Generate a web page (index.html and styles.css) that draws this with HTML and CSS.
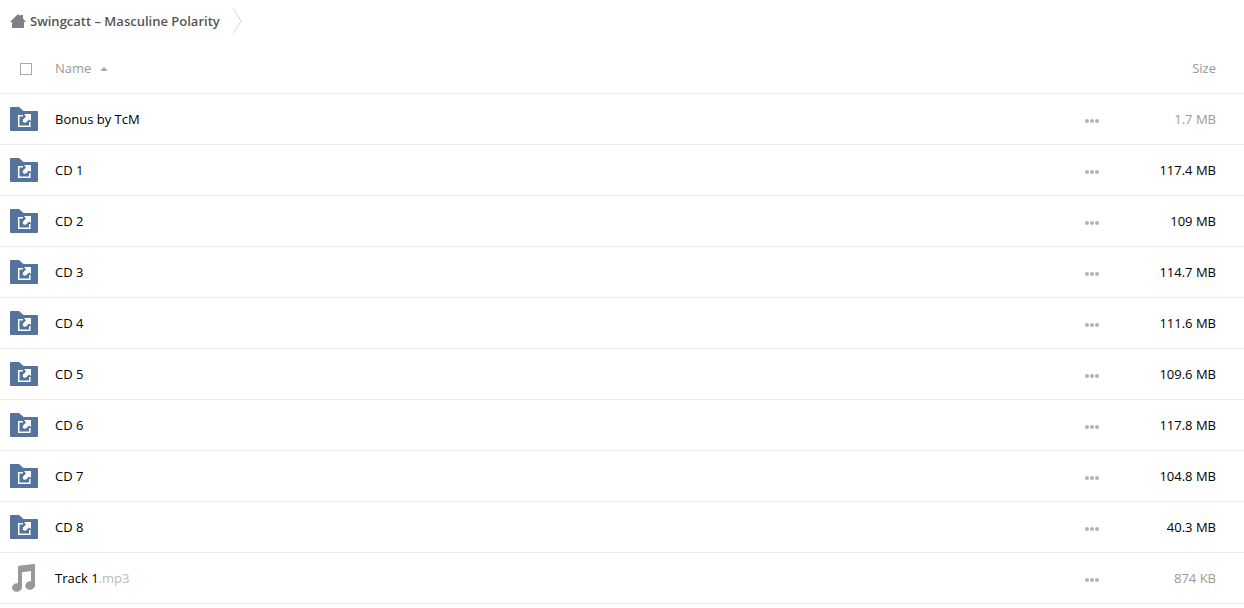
FILE: index.html
```
<!DOCTYPE html>
<html lang="en">
<head>
    <meta charset="UTF-8">
    <title>Swingcatt – Masculine Polarity</title>
    <link rel="stylesheet" href="styles.css">
</head>
<body>

<svg class="sprite" aria-hidden="true">
    <symbol id="folder" viewBox="0 0 28 24">
        <path fill="#54739d" d="M0 1Q0 0 1 0H9L13.500 4H27Q28 4 28 5V23Q28 24 27 24H1Q0 24 0 23Z"/>
        <path fill="none" stroke="#fff" stroke-width="1.500" d="M13 8.700H8.700V19.300H19.800V15"/>
        <path fill="#fff" d="M14 7H21V14L19 12.400L16 15.600L14 15.800L12.700 14.500L13 12.600L16 9.400Z"/>
    </symbol>
    <symbol id="music" viewBox="0 0 24 28">
        <g fill="#999">
            <path d="M6 3Q6 2 7 1.800L22 0Q23 0 23 1V21.500H19V7L10 8.300V23.500H6Z"/>
            <ellipse cx="5" cy="23.500" rx="5" ry="4.300" transform="rotate(-15 5 23.500)"/>
            <ellipse cx="18.200" cy="21.500" rx="4.900" ry="4.300" transform="rotate(-15 18.200 21.500)"/>
        </g>
    </symbol>
    <symbol id="dots" viewBox="0 0 14 4">
        <g fill="#b3b3b3"><circle cx="2" cy="2" r="2"/><circle cx="7" cy="2" r="2"/><circle cx="12" cy="2" r="2"/></g>
    </symbol>
</svg>

<nav class="breadcrumbs">
    <a href="#">
        <svg class="home" viewBox="0 0 16 14"><path fill="#808080" d="M8 0L10 2V1H13V4.500L16 8H14V14H2V8H0Z"/></svg>
        <span>Swingcatt – Masculine Polarity</span>
    </a>
    <svg class="arrow" viewBox="0 0 9 24"><path fill="none" stroke="#d5d5d5" d="M0.500 0L8 12L0.500 24"/></svg>
</nav>

<table class="files">
    <thead>
        <tr>
            <th class="icon"><input type="checkbox" class="check" aria-label="Select all"></th>
            <th class="name"><button type="button" class="sort">Name</button></th>
            <th class="actions"></th>
            <th class="size"><button type="button">Size</button></th>
        </tr>
    </thead>
    <tbody>
        <tr>
            <td class="icon"><svg class="folder"><use href="#folder"/></svg></td>
            <td class="name"><a href="#">Bonus by TcM</a></td>
            <td class="actions"><button type="button" aria-label="More"><svg class="dots"><use href="#dots"/></svg></button></td>
            <td class="size small">1.7 MB</td>
        </tr>
        <tr>
            <td class="icon"><svg class="folder"><use href="#folder"/></svg></td>
            <td class="name"><a href="#">CD 1</a></td>
            <td class="actions"><button type="button" aria-label="More"><svg class="dots"><use href="#dots"/></svg></button></td>
            <td class="size">117.4 MB</td>
        </tr>
        <tr>
            <td class="icon"><svg class="folder"><use href="#folder"/></svg></td>
            <td class="name"><a href="#">CD 2</a></td>
            <td class="actions"><button type="button" aria-label="More"><svg class="dots"><use href="#dots"/></svg></button></td>
            <td class="size">109 MB</td>
        </tr>
        <tr>
            <td class="icon"><svg class="folder"><use href="#folder"/></svg></td>
            <td class="name"><a href="#">CD 3</a></td>
            <td class="actions"><button type="button" aria-label="More"><svg class="dots"><use href="#dots"/></svg></button></td>
            <td class="size">114.7 MB</td>
        </tr>
        <tr>
            <td class="icon"><svg class="folder"><use href="#folder"/></svg></td>
            <td class="name"><a href="#">CD 4</a></td>
            <td class="actions"><button type="button" aria-label="More"><svg class="dots"><use href="#dots"/></svg></button></td>
            <td class="size">111.6 MB</td>
        </tr>
        <tr>
            <td class="icon"><svg class="folder"><use href="#folder"/></svg></td>
            <td class="name"><a href="#">CD 5</a></td>
            <td class="actions"><button type="button" aria-label="More"><svg class="dots"><use href="#dots"/></svg></button></td>
            <td class="size">109.6 MB</td>
        </tr>
        <tr>
            <td class="icon"><svg class="folder"><use href="#folder"/></svg></td>
            <td class="name"><a href="#">CD 6</a></td>
            <td class="actions"><button type="button" aria-label="More"><svg class="dots"><use href="#dots"/></svg></button></td>
            <td class="size">117.8 MB</td>
        </tr>
        <tr>
            <td class="icon"><svg class="folder"><use href="#folder"/></svg></td>
            <td class="name"><a href="#">CD 7</a></td>
            <td class="actions"><button type="button" aria-label="More"><svg class="dots"><use href="#dots"/></svg></button></td>
            <td class="size">104.8 MB</td>
        </tr>
        <tr>
            <td class="icon"><svg class="folder"><use href="#folder"/></svg></td>
            <td class="name"><a href="#">CD 8</a></td>
            <td class="actions"><button type="button" aria-label="More"><svg class="dots"><use href="#dots"/></svg></button></td>
            <td class="size">40.3 MB</td>
        </tr>
        <tr>
            <td class="icon"><svg class="music"><use href="#music"/></svg></td>
            <td class="name"><a href="#">Track 1<span class="ext">.mp3</span></a></td>
            <td class="actions"><button type="button" aria-label="More"><svg class="dots"><use href="#dots"/></svg></button></td>
            <td class="size small">874 KB</td>
        </tr>
    </tbody>
</table>

</body>
</html>
```
FILE: styles.css
```
body {
    margin: 0;
    background: #fff;
    color: #000;
    font: 13px/18px "Open Sans", sans-serif;
}
a {
    color: inherit;
    text-decoration: none;
}
button {
    padding: 0;
    border: none;
    background: none;
    color: inherit;
    font: inherit;
    cursor: pointer;
}
svg {
    display: block;
}
.sprite {
    display: none;
}

/* breadcrumbs */
.breadcrumbs {
    display: flex;
    align-items: center;
    gap: 13px;
    padding: 9px 10px 10px;
    color: #555;
    font-weight: 600;
}
.breadcrumbs a {
    display: flex;
    align-items: center;
    gap: 4px;
}
.home {
    width: 16px;
    height: 14px;
}
.arrow {
    width: 9px;
    height: 24px;
}

/* file list */
.files {
    width: 100%;
    border-collapse: separate;
    border-spacing: 0;
}
.files th, .files td {
    box-sizing: border-box;
    height: 51px;
    padding: 0;
    border-bottom: 1px solid #ebebeb;
    text-align: left;
    vertical-align: middle;
}
.files th {
    color: #999;
    font-weight: normal;
}
.files .icon {
    width: 55px;
    padding-left: 10px;
}
.files .actions {
    width: 34px;
}
.files .size {
    width: 135px;
    padding-right: 28px;
    text-align: right;
}
.files .small {
    color: #999;
}
.ext {
    color: #bbb;
}
.check {
    display: block;
    appearance: none;
    box-sizing: border-box;
    width: 12px;
    height: 12px;
    margin: 2px 0 0 10px;
    border: 1px solid #aaa;
    background: #fff;
}
.sort {
    display: flex;
    align-items: center;
    gap: 9px;
}
.sort::after {
    content: "";
    margin-top: 2px;
    border: 4px solid transparent;
    border-top: 0;
    border-bottom-color: #aaa;
}
.folder {
    width: 28px;
    height: 24px;
}
.music {
    width: 24px;
    height: 28px;
    margin-left: 2px;
}
.actions button {
    display: block;
    padding: 10px 10px 7px;
}
.dots {
    width: 14px;
    height: 4px;
}
```
